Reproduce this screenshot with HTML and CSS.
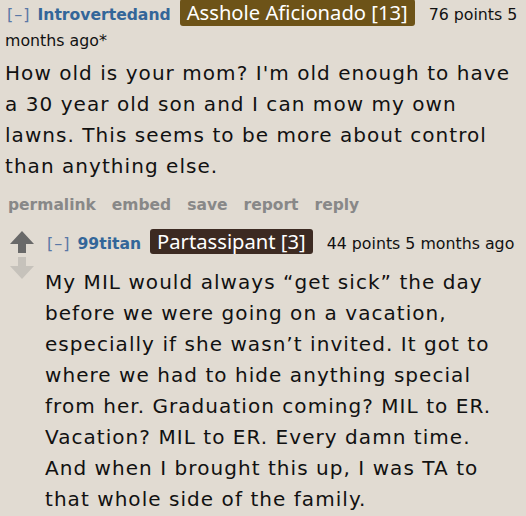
FILE: index.html
```html
<!DOCTYPE html>
<html>
<head>
<meta charset="utf-8">
<link rel="stylesheet" href="styles.css">
</head>
<body>
<div class="comment">
  <div class="tagline"><span class="expand">[–]</span><a class="author">Introvertedand</a><span class="flair flair-gold">Asshole Aficionado [13]</span><span class="score">76 points 5 months ago</span><span class="edited">*</span></div>
  <div class="md">How old is your mom? I'm old enough to have a 30 year old son and I can mow my own lawns. This seems to be more about control than anything else.</div>
  <ul class="buttons">
    <li>permalink</li>
    <li>embed</li>
    <li>save</li>
    <li>report</li>
    <li>reply</li>
  </ul>
  <div class="child">
    <div class="midcol">
      <svg class="arrow" width="24" height="22" viewBox="0 0 24 22"><path d="M12 0 L24 13 L16 13 L16 22 L8 22 L8 13 L0 13 Z" fill="#696969"/></svg>
      <svg class="arrow" width="24" height="22" viewBox="0 0 24 22"><path d="M8 0 L16 0 L16 9 L24 9 L12 22 L0 9 L8 9 Z" fill="#c6c2bb"/></svg>
    </div>
    <div class="entry">
      <div class="tagline"><span class="expand">[–]</span><a class="author">99titan</a><span class="flair flair-dark">Partassipant [3]</span><span class="score">44 points 5 months ago</span></div>
      <div class="md">My MIL would always “get sick” the day before we were going on a vacation, especially if she wasn’t invited. It got to where we had to hide anything special from her. Graduation coming? MIL to ER. Vacation? MIL to ER. Every damn time. And when I brought this up, I was TA to that whole side of the family.</div>
    </div>
  </div>
</div>
</body>
</html>
```

FILE: styles.css
```css
html, body {
  margin: 0;
  padding: 0;
  background: #e1dbd2;
}
body {
  font-family: "DejaVu Sans", Verdana, sans-serif;
  color: #111;
  padding: 0 8px 0 5px;
}
.tagline {
  font-size: 16px;
  line-height: 25px;
  color: #222;
  padding-top: 2px;
}
.expand {
  color: #5a78a6;
  font-weight: normal;
  letter-spacing: 1px;
  margin-left: 2px;
  margin-right: 7px;
}
.author {
  color: #336699;
  font-weight: bold;
  font-size: 15.6px;
  text-decoration: none;
}
.flair {
  display: inline-block;
  color: #fff;
  font-family: "Noto Sans", "Open Sans", sans-serif;
  font-size: 20.2px;
  line-height: 27px;
  padding: 0 7px;
  border-radius: 3px;
  margin: -3px 14px -3px 9px;
}
.flair-gold { background: #6d5318; }
.flair-dark { background: #3c2a22; line-height: 25px; margin-top: -2px; margin-bottom: -2px; }
.score { color: #111; font-size: 15.8px; }
.edited { color: #111; }
.md {
  font-size: 20px;
  line-height: 31px;
  letter-spacing: 1.05px;
  margin-top: 5px;
  color: #111;
}
.buttons {
  list-style: none;
  margin: 14px 0 0;
  padding: 0 0 0 3px;
  display: flex;
  gap: 16px;
  font-size: 15.5px;
  font-weight: bold;
  color: #888;
}
.child {
  display: flex;
  margin-top: 17px;
}
.midcol {
  width: 40px;
  display: flex;
  flex-direction: column;
  align-items: flex-start;
  padding-left: 5px;
  box-sizing: border-box;
  padding-top: 0;
  gap: 4px;
}
.entry {
  flex: 1;
}
.entry .tagline { padding-top: 0; }
.entry .md { margin-top: 10px; }
```
